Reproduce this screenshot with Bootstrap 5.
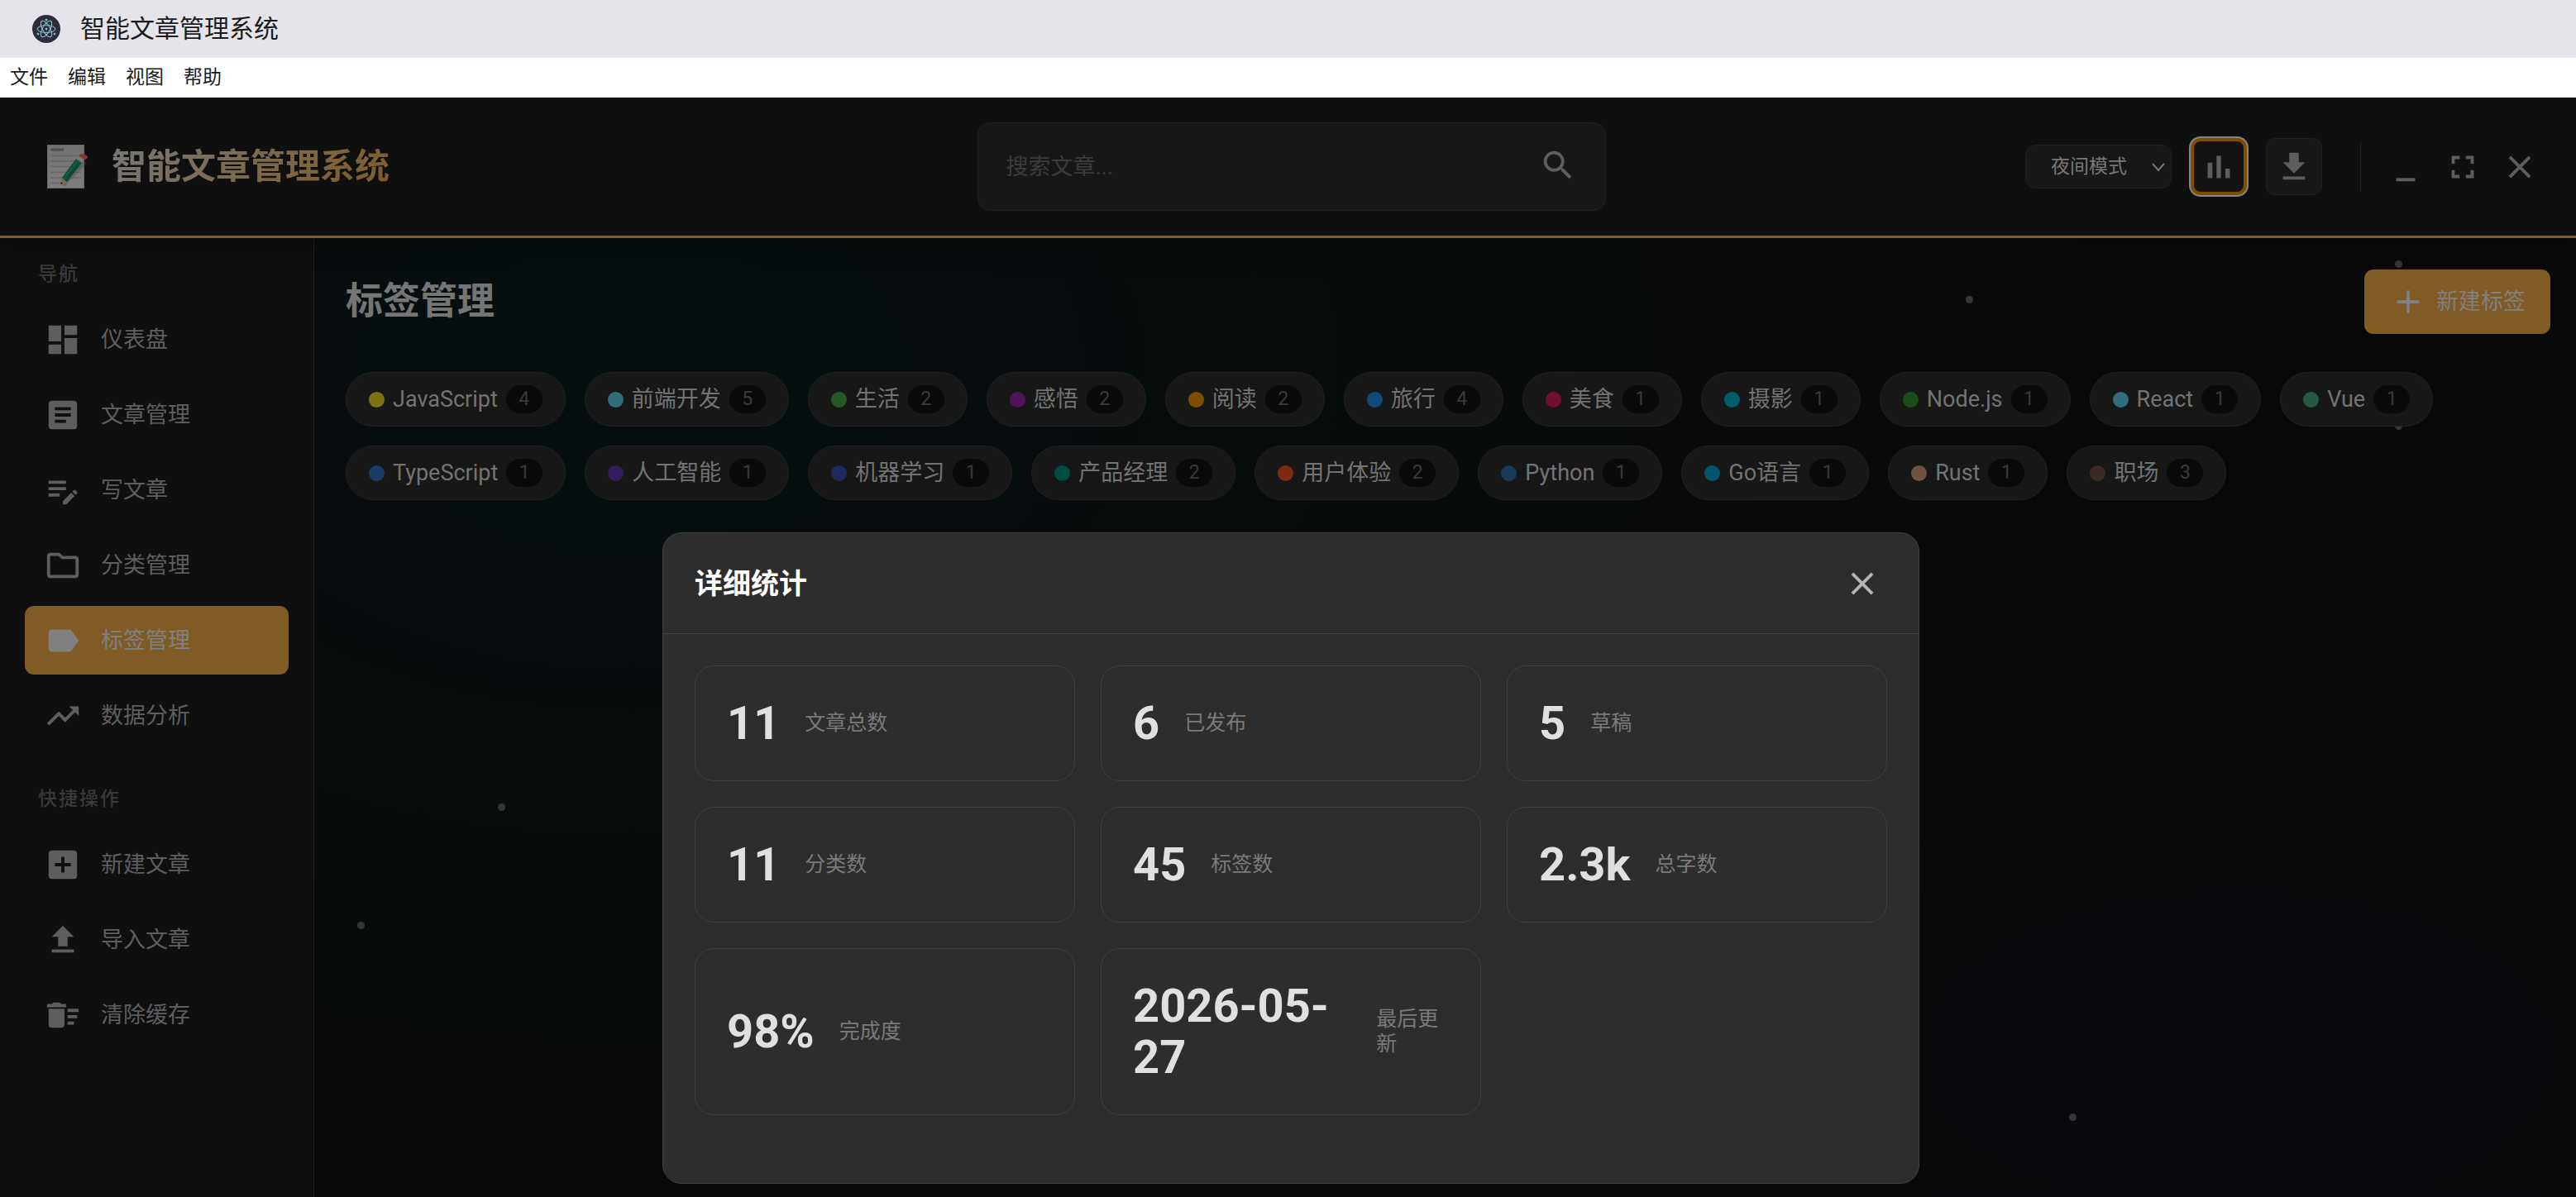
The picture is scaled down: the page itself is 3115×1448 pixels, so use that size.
<!DOCTYPE html>
<html lang="zh-CN" data-bs-theme="dark">
<head>
<meta charset="utf-8">
<meta name="viewport" content="width=device-width, initial-scale=1">
<title>智能文章管理系统</title>
<link href="https://cdn.jsdelivr.net/npm/bootstrap@5.3.0/dist/css/bootstrap.min.css" rel="stylesheet">
<style>
  body { font-family: Roboto, "Noto Sans CJK SC", sans-serif; font-size: 27px; line-height: 40px; background: #090909; color: #777; }
  svg { display: block; flex: none; }
  .ico { width: 46px; height: 46px; fill: currentColor; }

  .window-bar { height: 70px; padding: 0 39px; gap: 24px; background: #e5e4ea; color: #1b1b1b; font-size: 30px; }
  .window-menu { height: 48px; padding: 0 12px; gap: 24px; background: #fff; font-size: 23px; z-index: 3; }
  .window-menu a { color: #1b1b1b; }

  .app-head { height: 170px; padding: 0 38px 0 46px; background: #0f0f0f; border-bottom: 3px solid #805b25; box-shadow: 0 8px 30px rgba(0,0,0,.3); z-index: 2; }
  .head-side { flex: 1 1 0; }
  .brand-row { gap: 23px; }
  .brand-text { font-size: 42px; line-height: 60px; font-weight: 700; background: linear-gradient(135deg, #777 0%, #805b25 100%); -webkit-background-clip: text; background-clip: text; color: transparent; }
  .search-box { width: 760px; height: 107px; padding: 0 34px; background: #171717; border: 1px solid #202020; border-radius: 15px; }
  .search-box input, .search-box input:focus { background: transparent; border: 0; box-shadow: none; padding: 0; font-size: 27px; line-height: 40px; color: #777; }
  .search-box input::placeholder { color: #3b3b3b; opacity: 1; }
  .plain-btn { padding: 0; border: 0; background: transparent; color: #5e5e5e; display: flex; align-items: center; justify-content: center; }
  .head-actions { gap: 23px; }
  .mode-select { width: 177px; height: 53px; padding: 0 48px 0 30px; font-size: 23px; line-height: 34px; color: #777; background-color: #171717; border: 1px solid #202020; border-radius: 12px;
    background-image: url("data:image/svg+xml,%3Csvg xmlns='http://www.w3.org/2000/svg' viewBox='0 0 16 16'%3E%3Cpath d='M1 4l7 8 7-8' fill='none' stroke='%23777' stroke-width='2'/%3E%3C/svg%3E"); background-size: 16px 16px; background-position: right 7px center; }
  .tool-btn { width: 68px; height: 69px; background: #171717; border: 1px solid #202020; border-radius: 11px; }
  .tool-btn.is-focused { border: 4px solid #804d00; border-radius: 12px; background: #131313; box-shadow: 0 0 0 2px #858585; }
  .head-rule { width: 1px; height: 61px; margin-left: 23px; background: #222; }
  .win-btns { gap: 8px; }
  .win-btns .plain-btn, .stat-head .plain-btn { width: 61px; height: 61px; }

  .side { width: 380px; flex: none; padding: 26px 30px 0; background: #0f0f0f; border-right: 1px solid #212121; }
  .side-title { margin: 0 0 19px; padding-left: 16px; font-size: 23px; line-height: 36px; font-weight: 500; letter-spacing: 2px; color: #393939; }
  .side nav { gap: 8px; margin-bottom: 42px; }
  .side-link { height: 83px; padding: 0 23px; gap: 23px; border-radius: 11px; color: #5e5e5e; }
  .side-link.active { background: #805b25; color: #808080; }

  .main-pane { padding: 38px 31px 38px 38px; background:
      radial-gradient(ellipse 65% 100% at 14% 14%, rgba(0,26,30,.34), transparent 100%),
      radial-gradient(ellipse 50% 60% at 85% 85%, rgba(6,8,20,.35), transparent 100%), #090909; }
  .main-title { margin: 0; font-size: 45px; line-height: 66px; font-weight: 700; color: #757575; }
  .new-btn, .new-btn:hover { height: 78px; padding: 0 30px; gap: 11px; border: 0; border-radius: 11px; background: #805b25; color: #808080; font-size: 27px; }
  .tag-rows { margin-top: 46px; gap: 23px; }
  .tag-pill { height: 66px; padding: 0 27px; gap: 10px; background: #171717; border: 1px solid #212121; border-radius: 33px; color: #737373; }
  .tag-pill i { width: 19px; height: 19px; border-radius: 50%; background: var(--dot); }
  .tag-count { min-width: 44px; border-radius: 17px; background: #0a0a0a; color: #393939; font-size: 23px; line-height: 34px; text-align: center; }
  .spark { position: absolute; width: 9px; height: 9px; border-radius: 50%; background: #363636; box-shadow: 0 0 19px rgba(255,255,255,.12); }

  .overlay { padding: 0 0 16px 7px; z-index: 5; }
  .stat-modal { width: 1520px; max-width: 100%; background: #2d2d2d; border: 1px solid #424242; border-radius: 23px; color: #e0e0e0; }
  .stat-head { padding: 30px 38px; border-bottom: 1px solid #424242; }
  .stat-head h2 { margin: 0; font-size: 34px; line-height: 50px; font-weight: 700; }
  .stat-head .plain-btn { color: #b3b3b3; }
  .stat-grid { display: grid; grid-template-columns: repeat(3, 1fr); gap: 31px; padding: 38px 38px 82px; }
  .stat-card { padding: 38px; gap: 30px; border: 1px solid #404040; border-radius: 23px; }
  .stat-num { font-size: 56px; line-height: 62px; font-weight: 700; }
  .stat-lab { font-size: 25px; line-height: 30px; color: #7a7a7a; }
</style>
<script src="https://cdn.jsdelivr.net/npm/bootstrap@5.3.0/dist/js/bootstrap.bundle.min.js"></script>
</head>
<body>
<div class="vh-100 d-flex flex-column overflow-hidden position-relative">

  <div class="window-bar d-flex align-items-center">
    <svg width="34" height="34" viewBox="0 0 34 34" fill="none" stroke="#8cc5d0" stroke-width="1">
      <circle cx="17" cy="17" r="17" fill="#2b2e3a" stroke="none"/>
      <ellipse cx="17" cy="17" rx="11" ry="4.4" transform="rotate(60 17 17)"/>
      <ellipse cx="17" cy="17" rx="11" ry="4.4" transform="rotate(-60 17 17)"/>
      <ellipse cx="17" cy="17" rx="11" ry="4.4"/>
      <circle cx="17" cy="17" r="1" fill="#8cc5d0"/>
      <circle cx="17" cy="6" r="1" fill="#8cc5d0"/><circle cx="7" cy="23" r="1" fill="#8cc5d0"/><circle cx="27" cy="23" r="1" fill="#8cc5d0"/>
    </svg>
    <span>智能文章管理系统</span>
  </div>

  <div class="window-menu d-flex align-items-center position-relative">
    <a href="#" class="text-decoration-none">文件</a>
    <a href="#" class="text-decoration-none">编辑</a>
    <a href="#" class="text-decoration-none">视图</a>
    <a href="#" class="text-decoration-none">帮助</a>
  </div>

  <header class="app-head d-flex align-items-center position-relative">
    <div class="head-side brand-row d-flex align-items-center">
      <svg width="66" height="56" viewBox="0 0 66 56">
        <defs><linearGradient id="paper" x1="0" y1="0" x2="0" y2="1"><stop offset="0" stop-color="#707070"/><stop offset="1" stop-color="#7f7f7f"/></linearGradient></defs>
        <rect x="11" y="1" width="45" height="53" fill="url(#paper)"/>
        <path d="M11.500 1.500H55.500V53.500H11.500Z" fill="none" stroke="#686868"/>
        <path d="M15 7h16" stroke="#505050" stroke-width="3"/>
        <path d="M15 14.500h37M15 21h37M15 27.500h37M15 34.500h37M15 41h37M15 47.500h12" stroke="#666" stroke-width="1.500"/>
        <path d="M30 50L57 21" stroke="#444" stroke-width="6" opacity=".35"/>
        <path d="M27 49L29 41L35 46Z" fill="#8a6a4c"/>
        <path d="M27 49L28 46L30 47.500Z" fill="#222"/>
        <path d="M29 41L46 18L53 23L35 46Z" fill="#0b4a38"/>
        <path d="M31 42.500L48.500 19.500" stroke="#146048" stroke-width="2"/>
        <path d="M46 18L49 14L56 19L53 23Z" fill="#777"/>
        <path d="M49 14C51 11 60 12 60 17L56 19.500Z" fill="#82392f"/>
      </svg>
      <span class="brand-text">智能文章管理系统</span>
    </div>

    <form class="search-box d-flex align-items-center" role="search">
      <input type="search" class="form-control" placeholder="搜索文章..." aria-label="搜索文章">
      <button type="button" class="plain-btn mb-1" aria-label="搜索"><svg class="ico" viewBox="0 0 24 24"><path d="M15.500 14h-.79l-.28-.27A6.471 6.471 0 0 0 16 9.500 6.500 6.500 0 1 0 9.500 16c1.610 0 3.090-.59 4.230-1.570l.27.28v.79l5 4.990L20.490 19l-4.990-5zm-6 0C7.010 14 5 11.990 5 9.500S7.010 5 9.500 5 14 7.010 14 9.500 11.990 14 9.500 14z"/></svg></button>
    </form>

    <div class="head-side head-actions d-flex align-items-center justify-content-end">
      <select class="form-select mode-select" aria-label="主题模式"><option selected>夜间模式</option><option>日间模式</option></select>
      <button type="button" class="plain-btn tool-btn is-focused" aria-label="统计"><svg class="ico" viewBox="0 0 24 24"><path d="M5 9.200h3V19H5zM10.600 5h2.800v14h-2.800zm5.600 8H19v6h-2.800z"/></svg></button>
      <button type="button" class="plain-btn tool-btn" aria-label="下载"><svg class="ico" viewBox="0 0 24 24"><path d="M19 9h-4V3H9v6H5l7 7 7-7zM5 18v2h14v-2H5z"/></svg></button>
      <div class="head-rule"></div>
      <div class="win-btns d-flex">
        <button type="button" class="plain-btn" aria-label="最小化"><svg class="ico" viewBox="0 0 24 24"><path d="M6 19h12v2H6z"/></svg></button>
        <button type="button" class="plain-btn" aria-label="全屏"><svg class="ico" viewBox="0 0 24 24"><path d="M7 14H5v5h5v-2H7v-3zm-2-4h2V7h3V5H5v5zm12 7h-3v2h5v-5h-2v3zM14 5v2h3v3h2V5h-5z"/></svg></button>
        <button type="button" class="plain-btn" aria-label="关闭窗口"><svg class="ico" viewBox="0 0 24 24"><path d="M19 6.410L17.590 5 12 10.590 6.410 5 5 6.410 10.590 12 5 17.590 6.410 19 12 13.410 17.590 19 19 17.590 13.410 12z"/></svg></button>
      </div>
    </div>
  </header>

  <div class="d-flex flex-fill">
    <aside class="side">
      <h6 class="side-title">导航</h6>
      <nav class="d-flex flex-column">
        <a href="#" class="side-link d-flex align-items-center text-decoration-none"><svg class="ico" viewBox="0 0 24 24"><path d="M3 13h8V3H3v10zm0 8h8v-6H3v6zm10 0h8V11h-8v10zm0-18v6h8V3h-8z"/></svg>仪表盘</a>
        <a href="#" class="side-link d-flex align-items-center text-decoration-none"><svg class="ico" viewBox="0 0 24 24"><path d="M19 3H5c-1.100 0-2 .9-2 2v14c0 1.100.9 2 2 2h14c1.100 0 2-.9 2-2V5c0-1.100-.9-2-2-2zm-5 14H7v-2h7v2zm3-4H7v-2h10v2zm0-4H7V7h10v2z"/></svg>文章管理</a>
        <a href="#" class="side-link d-flex align-items-center text-decoration-none"><svg class="ico" viewBox="0 0 24 24"><path d="M3 10h11v2H3v-2zm0-2h11V6H3v2zm0 8h7v-2H3v2zm15.010-3.130.71-.71c.39-.39 1.020-.39 1.410 0l.71.71c.39.39.39 1.020 0 1.410l-.71.71-2.120-2.120zm-.71.71-5.300 5.300V21h2.120l5.300-5.300-2.120-2.120z"/></svg>写文章</a>
        <a href="#" class="side-link d-flex align-items-center text-decoration-none"><svg class="ico" viewBox="0 0 24 24"><path d="M9.170 6l2 2H20v10H4V6h5.170M10 4H4c-1.100 0-1.990.9-1.990 2L2 18c0 1.100.9 2 2 2h16c1.100 0 2-.9 2-2V8c0-1.100-.9-2-2-2h-8l-2-2z"/></svg>分类管理</a>
        <a href="#" class="side-link active d-flex align-items-center text-decoration-none" aria-current="page"><svg class="ico" viewBox="0 0 24 24"><path d="M17.630 5.840C17.270 5.330 16.670 5 16 5L5 5.010C3.900 5.010 3 5.900 3 7v10c0 1.100.9 1.990 2 1.990L16 19c.67 0 1.270-.33 1.630-.84L22 12l-4.370-6.160z"/></svg>标签管理</a>
        <a href="#" class="side-link d-flex align-items-center text-decoration-none"><svg class="ico" viewBox="0 0 24 24"><path d="M16 6l2.290 2.290-4.880 4.880-4-4L2 16.590 3.410 18l6-6 4 4 6.300-6.290L22 12V6z"/></svg>数据分析</a>
      </nav>
      <h6 class="side-title">快捷操作</h6>
      <nav class="d-flex flex-column">
        <a href="#" class="side-link d-flex align-items-center text-decoration-none"><svg class="ico" viewBox="0 0 24 24"><path d="M19 3H5c-1.110 0-2 .9-2 2v14c0 1.100.89 2 2 2h14c1.100 0 2-.9 2-2V5c0-1.100-.9-2-2-2zm-2 10h-4v4h-2v-4H7v-2h4V7h2v4h4v2z"/></svg>新建文章</a>
        <a href="#" class="side-link d-flex align-items-center text-decoration-none"><svg class="ico" viewBox="0 0 24 24"><path d="M9 16h6v-6h4l-7-7-7 7h4zm-4 2h14v2H5z"/></svg>导入文章</a>
        <a href="#" class="side-link d-flex align-items-center text-decoration-none"><svg class="ico" viewBox="0 0 24 24"><path d="M15 16h4v2h-4zm0-8h7v2h-7zm0 4h6v2h-6zM3 18c0 1.100.9 2 2 2h6c1.100 0 2-.9 2-2V8H3v10zM14 5h-3l-1-1H6L5 5H2v2h12z"/></svg>清除缓存</a>
      </nav>
    </aside>

    <main class="main-pane flex-fill position-relative">
      <span class="spark" style="left:73%;top:6%"></span>
      <span class="spark" style="left:92%;top:2.300%"></span>
      <span class="spark" style="left:92%;top:19.200%"></span>
      <span class="spark" style="left:8.100%;top:59%"></span>
      <span class="spark" style="left:1.900%;top:71.300%"></span>
      <span class="spark" style="left:77.600%;top:91.300%"></span>

      <div class="d-flex align-items-center justify-content-between position-relative">
        <h1 class="main-title">标签管理</h1>
        <button type="button" class="btn new-btn d-flex align-items-center"><svg class="ico" viewBox="0 0 24 24"><path d="M19 13h-6v6h-2v-6H5v-2h6V5h2v6h6v2z"/></svg>新建标签</button>
      </div>

      <div class="tag-rows d-flex flex-wrap position-relative">
        <div class="tag-pill d-flex align-items-center" style="--dot:#80730f"><i></i>JavaScript<span class="tag-count">4</span></div>
        <div class="tag-pill d-flex align-items-center" style="--dot:#306d7d"><i></i>前端开发<span class="tag-count">5</span></div>
        <div class="tag-pill d-flex align-items-center" style="--dot:#265828"><i></i>生活<span class="tag-count">2</span></div>
        <div class="tag-pill d-flex align-items-center" style="--dot:#4e1458"><i></i>感悟<span class="tag-count">2</span></div>
        <div class="tag-pill d-flex align-items-center" style="--dot:#804c00"><i></i>阅读<span class="tag-count">2</span></div>
        <div class="tag-pill d-flex align-items-center" style="--dot:#114b7a"><i></i>旅行<span class="tag-count">4</span></div>
        <div class="tag-pill d-flex align-items-center" style="--dot:#750f32"><i></i>美食<span class="tag-count">1</span></div>
        <div class="tag-pill d-flex align-items-center" style="--dot:#005e6a"><i></i>摄影<span class="tag-count">1</span></div>
        <div class="tag-pill d-flex align-items-center" style="--dot:#1a4d1a"><i></i>Node.js<span class="tag-count">1</span></div>
        <div class="tag-pill d-flex align-items-center" style="--dot:#306d7d"><i></i>React<span class="tag-count">1</span></div>
        <div class="tag-pill d-flex align-items-center" style="--dot:#215c42"><i></i>Vue<span class="tag-count">1</span></div>
        <div class="tag-pill d-flex align-items-center" style="--dot:#193d66"><i></i>TypeScript<span class="tag-count">1</span></div>
        <div class="tag-pill d-flex align-items-center" style="--dot:#331d5c"><i></i>人工智能<span class="tag-count">1</span></div>
        <div class="tag-pill d-flex align-items-center" style="--dot:#20295b"><i></i>机器学习<span class="tag-count">1</span></div>
        <div class="tag-pill d-flex align-items-center" style="--dot:#004b44"><i></i>产品经理<span class="tag-count">2</span></div>
        <div class="tag-pill d-flex align-items-center" style="--dot:#802b11"><i></i>用户体验<span class="tag-count">2</span></div>
        <div class="tag-pill d-flex align-items-center" style="--dot:#1b3b55"><i></i>Python<span class="tag-count">1</span></div>
        <div class="tag-pill d-flex align-items-center" style="--dot:#00566c"><i></i>Go语言<span class="tag-count">1</span></div>
        <div class="tag-pill d-flex align-items-center" style="--dot:#6f5242"><i></i>Rust<span class="tag-count">1</span></div>
        <div class="tag-pill d-flex align-items-center" style="--dot:#3c2a24"><i></i>职场<span class="tag-count">3</span></div>
      </div>
    </main>
  </div>

  <div class="overlay position-absolute top-0 start-0 w-100 h-100 d-flex align-items-end justify-content-center">
    <section class="stat-modal" role="dialog" aria-labelledby="stat-title">
      <div class="stat-head d-flex align-items-center justify-content-between">
        <h2 id="stat-title">详细统计</h2>
        <button type="button" class="plain-btn" aria-label="关闭"><svg class="ico" viewBox="0 0 24 24"><path d="M19 6.410L17.590 5 12 10.590 6.410 5 5 6.410 10.590 12 5 17.590 6.410 19 12 13.410 17.590 19 19 17.590 13.410 12z"/></svg></button>
      </div>
      <div class="stat-grid">
        <div class="stat-card d-flex align-items-center"><div class="stat-num">11</div><div class="stat-lab">文章总数</div></div>
        <div class="stat-card d-flex align-items-center"><div class="stat-num">6</div><div class="stat-lab">已发布</div></div>
        <div class="stat-card d-flex align-items-center"><div class="stat-num">5</div><div class="stat-lab">草稿</div></div>
        <div class="stat-card d-flex align-items-center"><div class="stat-num">11</div><div class="stat-lab">分类数</div></div>
        <div class="stat-card d-flex align-items-center"><div class="stat-num">45</div><div class="stat-lab">标签数</div></div>
        <div class="stat-card d-flex align-items-center"><div class="stat-num">2.3k</div><div class="stat-lab">总字数</div></div>
        <div class="stat-card d-flex align-items-center"><div class="stat-num">98%</div><div class="stat-lab">完成度</div></div>
        <div class="stat-card d-flex align-items-center"><div class="stat-num">2026-05-27</div><div class="stat-lab">最后更新</div></div>
      </div>
    </section>
  </div>
</div>
</body>
</html>
